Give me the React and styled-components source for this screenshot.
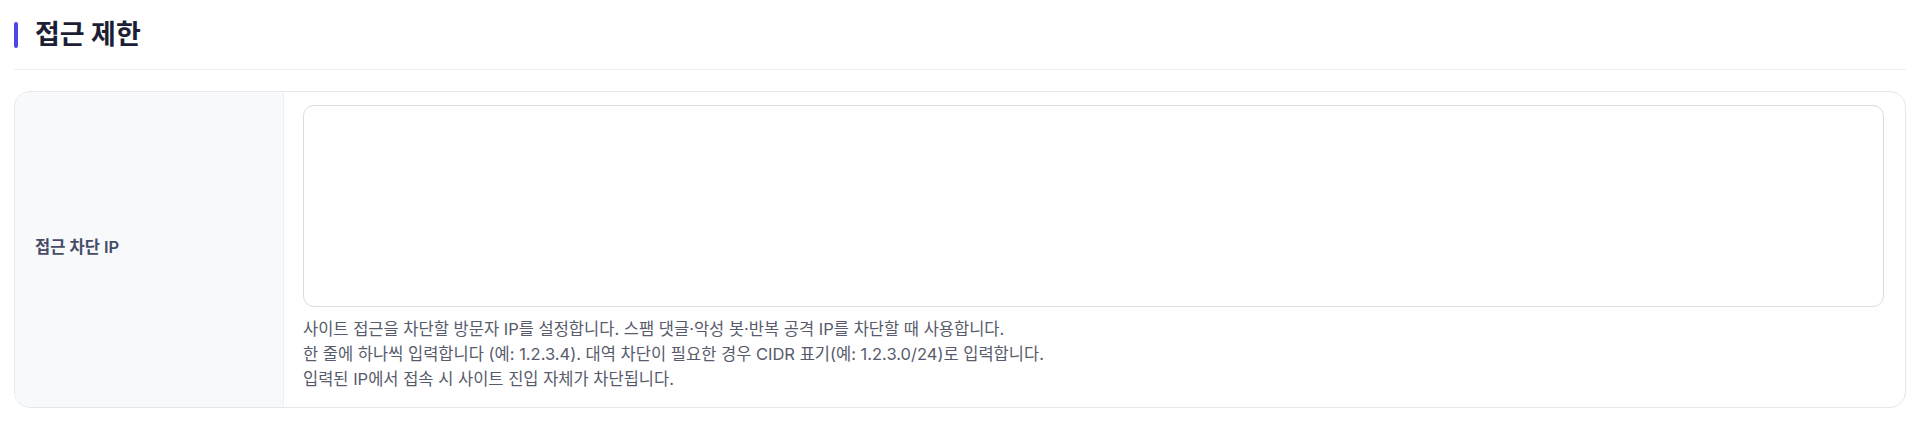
import React from 'react'
import styled, { createGlobalStyle } from 'styled-components'

const GlobalStyle = createGlobalStyle`
    body {
        margin: 0;
        background: #ffffff;
        font-family: Inter, "Noto Sans CJK KR", sans-serif;
        -webkit-font-smoothing: antialiased;
    }
`

const helpLines = [
    '사이트 접근을 차단할 방문자 IP를 설정합니다. 스팸 댓글·악성 봇·반복 공격 IP를 차단할 때 사용합니다.',
    '한 줄에 하나씩 입력합니다 (예: 1.2.3.4). 대역 차단이 필요한 경우 CIDR 표기(예: 1.2.3.0/24)로 입력합니다.',
    '입력된 IP에서 접속 시 사이트 진입 자체가 차단됩니다.',
]

function App() {
    return (
        <Page>
            <GlobalStyle />
            <SectionHeader>
                <AccentBar />
                <Title>접근 제한</Title>
            </SectionHeader>
            <Card>
                <LabelCell>
                    <Label htmlFor="blocked-ips">접근 차단 IP</Label>
                </LabelCell>
                <FieldCell>
                    <TextArea id="blocked-ips" />
                    <Help>
                        {helpLines.map((line, index) =>
                            <p key={index}>{line}</p>
                        )}
                    </Help>
                </FieldCell>
            </Card>
        </Page>
    )
}

export default App

const Page = styled.div`
    padding: 0 14px;
`

const SectionHeader = styled.div`
    display: flex;
    align-items: center;
    gap: 17px;
    padding: 20px 0 20px;
    border-bottom: 1px solid #eceef1;
`

const AccentBar = styled.span`
    width: 4px;
    height: 26px;
    border-radius: 2px;
    background: #4f46e5;
`

const Title = styled.h2`
    margin: 0;
    font-size: 27px;
    line-height: 29px;
    font-weight: 700;
    color: #1c1e35;
`

const Card = styled.div`
    margin-top: 21px;
    display: grid;
    grid-template-columns: 269px 1fr;
    border: 1px solid #e5e7eb;
    border-radius: 16px;
    overflow: hidden;
`

const LabelCell = styled.div`
    display: flex;
    align-items: center;
    padding: 0 20px 8px;
    background: #f8f9fb;
    border-right: 1px solid #eef0f3;
`

const Label = styled.label`
    font-size: 16.5px;
    font-weight: 600;
    color: #474c68;
`

const FieldCell = styled.div`
    display: flex;
    flex-direction: column;
    padding: 13px 21px 15px 19px;
`

const TextArea = styled.textarea`
    box-sizing: border-box;
    width: 100%;
    height: 202px;
    border: 1px solid #d9dce3;
    border-radius: 11px;
    background: #ffffff;
    resize: none;
    font: inherit;
    outline: none;
`

const Help = styled.div`
    margin-top: 10px;
    font-size: 16.5px;
    line-height: 25px;
    color: #575b6b;

    p {
        margin: 0;
    }
`
